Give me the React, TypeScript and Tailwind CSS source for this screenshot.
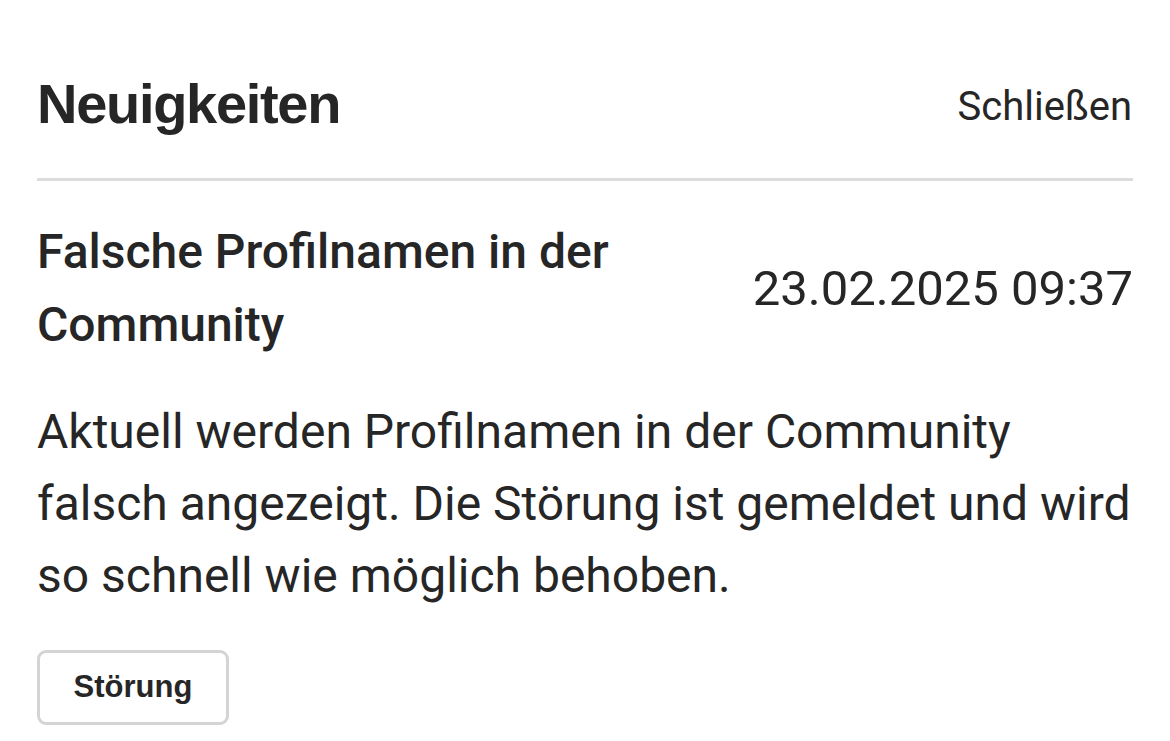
import React from "react";

export default function App() {
  return (
    <div className="w-[1170px] h-[741px] bg-white overflow-hidden text-[#262626]" style={{ fontFamily: "Roboto, 'Noto Sans', sans-serif" }}>
      <div className="px-[37px]">
        <div className="flex items-start justify-between h-[178px]">
          <h1 className="mt-[76px] text-[56px] leading-none font-bold tracking-[-1.3px] text-[#262626]" style={{ fontFamily: "'Liberation Sans', Arial, sans-serif" }}>
            Neuigkeiten
          </h1>
          <button className="mt-[87px] text-[40px] leading-none text-[#262626] pr-[1px]">Schließen</button>
        </div>
        <div className="h-[3px] bg-[#dcdcdc]" />
        <div className="flex items-center justify-between pt-[34px]">
          <h2 className="w-[620px] text-[48px] leading-[73px] font-medium">
            Falsche Profilnamen in der Community
          </h2>
          <div className="text-[49px] leading-none pt-[1px]">23.02.2025 09:37</div>
        </div>
        <p className="mt-[35px] text-[48px] leading-[72px]">
          Aktuell werden Profilnamen in der Community<br />
          falsch angezeigt. Die Störung ist gemeldet und wird<br />
          so schnell wie möglich behoben.
        </p>
        <div className="mt-[38px]">
          <button
            className="w-[192px] h-[75px] rounded-[9px] border-[3px] border-[#d4d4d4] text-[31px] font-bold text-[#262626]"
            style={{ fontFamily: "'Liberation Sans', Arial, sans-serif" }}
          >
            Störung
          </button>
        </div>
      </div>
    </div>
  );
}
